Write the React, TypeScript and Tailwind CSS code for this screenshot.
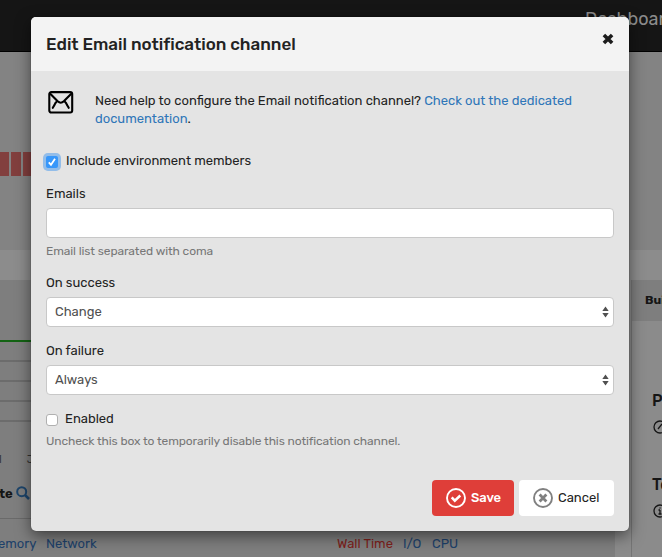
import React from "react";

function MailIcon() {
  return (
    <svg width="26" height="24" viewBox="0 0 26 24" fill="none" stroke="#000" strokeWidth="2.1" strokeLinecap="round" strokeLinejoin="round">
      <rect x="1.3" y="1.1" width="22.900" height="20.400" rx="2" />
      <path d="M2.500 3l7.200 7.300c1.900 1.800 4.200 1.800 6.100 0L23 3" />
      <path d="M8.600 10.700c-1.200 1-1.600 1.700-2 3L4.800 16.800M16.900 10.700c1.200 1 1.600 1.700 2 3l1.800 3.100" />
    </svg>
  );
}

function CloseIcon() {
  return (
    <svg width="12" height="12" viewBox="0 0 12 12" stroke="#1c1c1c" strokeWidth="3.6">
      <path d="M1.900 1.900l8.200 8.200M10.100 1.900l-8.200 8.200" />
    </svg>
  );
}

function SaveIcon() {
  return (
    <svg width="20" height="20" viewBox="0 0 20 20" fill="none" stroke="#fff">
      <circle cx="10" cy="10" r="9" strokeWidth="1.900" />
      <path d="M5.700 9.400l3.100 3.300 5.500-5.200" strokeWidth="2.500" />
    </svg>
  );
}

function CancelIcon() {
  return (
    <svg width="20" height="20" viewBox="0 0 20 20" fill="none" stroke="#808080">
      <circle cx="10" cy="10" r="9" strokeWidth="1.900" />
      <path d="M6.600 6.600l6.800 6.800M13.400 6.600l-6.800 6.800" strokeWidth="2.800" />
    </svg>
  );
}

function SelectBox({ value }: { value: string }) {
  return (
    <div className="flex h-[30px] items-center justify-between rounded-[4px] border border-[#c8c8c8] bg-white pr-1 pl-2 text-[#505050]">
      <span>{value}</span>
      <svg width="7" height="12" viewBox="0 0 7 12" fill="#505050">
        <path d="M0.300 5L3.500 0.500 6.700 5zM0.300 7L3.500 11.500 6.700 7z" />
      </svg>
    </div>
  );
}

function Page() {
  return (
    <div className="flex h-full flex-col">
      <header className="flex h-[52px] shrink-0 justify-end border-b border-black bg-[#151515]">
        <div className="w-[77px] shrink-0 pt-[6px] text-[18px] leading-[26px] whitespace-nowrap text-[#8c8c8c]">Dashboard</div>
      </header>
      <section className="h-[198px] shrink-0 bg-[#838383] pt-[100px]">
        <div className="flex h-6 gap-[2px]">
          <div className="w-[9px] bg-[#823f3e]" />
          <div className="w-[10px] bg-[#823f3e]" />
          <div className="w-[10px] bg-[#823f3e]" />
        </div>
      </section>
      <div className="h-[30px] shrink-0 bg-[#8c8c8c]" />
      <div className="flex grow bg-[#8b8b8b]">
        <main className="flex w-[615px] shrink-0 flex-col bg-[#7e7e7e] pt-[60px]">
          <div className="h-5 border-t-2 border-[#136313]" />
          <div className="h-5 border-t-2 border-[#6c6c6c]" />
          <div className="h-5 border-t-2 border-[#6c6c6c]" />
          <div className="h-5 border-t-2 border-[#6c6c6c]" />
          <div className="h-[30px] border-t-2 border-[#6c6c6c]" />
          <div className="flex h-[18px] items-center gap-[25px] pt-[2px] text-[11px] text-[#333]">
            <span className="-ml-[1px]">l</span>
            <span>J</span>
          </div>
          <div className="flex h-[51px] items-center gap-[5px] border-b border-[#6a6a6a] pt-[2px] text-[13px] font-bold text-[#151515]">
            <span className="-ml-[1px] w-[12px]">te</span>
            <svg className="-mt-[2px]" width="14" height="14" viewBox="0 0 14 14" fill="none" stroke="#1d456b" strokeWidth="2">
              <circle cx="5.700" cy="5.700" r="4.500" />
              <path d="M9 9l4 4" strokeWidth="2.500" />
            </svg>
          </div>
          <div className="flex h-[38px] pt-[15px] text-[13px] leading-[20px] text-[#1d416a]">
            <span className="-ml-[2px] w-[48px]">emory</span>
            <span className="w-[291px]">Network</span>
            <span className="w-[66px] text-[#7d1f1b]">Wall Time</span>
            <span className="w-[29px]">I/O</span>
            <span>CPU</span>
          </div>
        </main>
        <aside className="ml-4 flex grow flex-col border-l border-[#757575] text-[#151515]">
          <div className="h-[41px] bg-[#7e7e7e] pl-[13px] text-[12px] leading-[41px] font-bold whitespace-nowrap">Bui</div>
          <div className="pt-[68px] pl-5 text-[16px] leading-[24px] font-medium">P</div>
          <svg className="mt-[7px] ml-[21px]" width="14" height="14" viewBox="0 0 14 14" fill="none" stroke="#151515" strokeWidth="1.300">
            <circle cx="7" cy="7" r="6" />
            <path d="M5 9l4-5" />
          </svg>
          <div className="mt-[39px] pl-5 text-[16px] leading-[24px] font-medium">To</div>
          <svg className="mt-[7px] ml-[21px]" width="14" height="14" viewBox="0 0 14 14" fill="none" stroke="#151515" strokeWidth="1.300">
            <circle cx="7" cy="7" r="6" />
            <path d="M7 6v4M5.500 10h3M5.500 6H7M7 3.500v1" />
          </svg>
        </aside>
      </div>
    </div>
  );
}

function Dialog() {
  return (
    <div className="absolute top-[17px] left-[31px] flex h-[514px] w-[598px] flex-col overflow-hidden rounded-[5px] bg-[#e4e4e4] shadow-[0_5px_15px_rgba(0,0,0,0.5),0_0_1px_rgba(0,0,0,0.5)]">
      <div className="flex h-[54px] shrink-0 justify-between bg-[#f3f3f3] pr-[15px] pl-[15px]">
        <h1 className="text-[17px] leading-[54px] font-medium whitespace-nowrap tracking-[-0.02px]">Edit Email notification channel</h1>
        <button className="mt-[16px] h-3"><CloseIcon /></button>
      </div>
      <div className="flex flex-col px-[15px] pt-[20px]">
        <div className="flex h-[60px] text-[13px] leading-[18px]">
          <div className="w-[49px] pl-[2px]"><MailIcon /></div>
          <div className="pt-[1px] whitespace-nowrap">
            <div>
              Need help to configure the Email notification channel? <a className="text-[#2f76b8]">Check out the dedicated</a>
            </div>
            <div><a className="text-[#2f76b8]">documentation</a>.</div>
          </div>
        </div>
        <label className="flex h-[20px] gap-2">
          <span className="mt-[5px] flex size-3 items-center justify-center rounded-[2px] bg-[#3797fa] shadow-[0_0_0_3px_#93bde9]">
            <svg width="10" height="10" viewBox="0 0 10 10" fill="none" stroke="#fff" strokeWidth="1.800">
              <path d="M1.800 5.300l2.200 2.500 4-6" />
            </svg>
          </span>
          <span className="leading-[19px]">Include environment members</span>
        </label>
        <div className="mt-[13px] h-[24px] leading-[20px]">Emails</div>
        <div className="h-[30px] rounded-[4px] border border-[#c8c8c8] bg-white" />
        <div className="mt-[3px] h-[20px] text-[12px] leading-[20px] tracking-[-0.1px] text-[#777]">Email list separated with coma</div>
        <div className="mt-[12px] h-[24px] leading-[20px]">On success</div>
        <SelectBox value="Change" />
        <div className="mt-[14px] h-[24px] leading-[20px]">On failure</div>
        <SelectBox value="Always" />
        <label className="mt-[14px] flex h-[22px] gap-[7px]">
          <span className="mt-[5px] size-[12px] rounded-[3px] border border-[#b0b0b0] bg-white" />
          <span className="leading-[20px]">Enabled</span>
        </label>
        <div className="h-[20px] text-[12px] leading-[20px] tracking-[-0.1px] text-[#777]">Uncheck this box to temporarily disable this notification channel.</div>
      </div>
      <div className="mt-[29px] flex h-9 shrink-0 justify-end gap-[5px] pr-[15px]">
        <button className="flex w-[82px] items-center gap-[5px] rounded-[4px] bg-[#df3e39] pl-[14px] font-medium text-white"><SaveIcon /><span className="tracking-[-0.1px]">Save</span></button>
        <button className="flex w-[95px] items-center gap-[5px] rounded-[4px] bg-white pl-[14px]"><CancelIcon /><span>Cancel</span></button>
      </div>
    </div>
  );
}

export default function App() {
  return (
    <div className="relative h-[557px] w-[662px] overflow-hidden font-['Rubik','Roboto',sans-serif] text-[13px] text-[#222]">
      <Page />
      <Dialog />
    </div>
  );
}
